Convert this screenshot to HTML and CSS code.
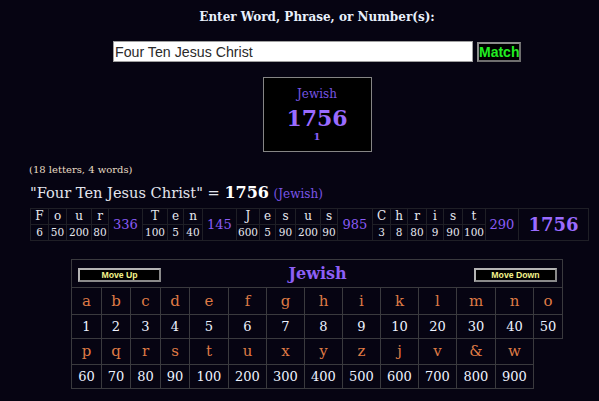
FILE: index.html
```html
<!DOCTYPE html>
<html>
<head>
<meta charset="utf-8">
<link rel="stylesheet" href="styles.css">
</head>
<body>
<div class="centered">
  <div class="heading">Enter Word, Phrase, or Number(s):</div>
  <div class="entry">
    <input class="phrase" type="text" value="Four Ten Jesus Christ">
    <button class="match">Match</button>
  </div>
  <div class="result">
    <div class="r-sys">Jewish</div>
    <div class="r-val">1756</div>
    <div class="r-num">1</div>
  </div>
</div>
<div class="counts">(18 letters, 4 words)</div>
<div class="quote">"Four Ten Jesus Christ" = <b class="q-tot">1756</b> <span class="q-sys">(Jewish)</span></div>
<div class="breakdown">
  <div class="bl">F</div><div class="bn">6</div>
  <div class="bl">o</div><div class="bn">50</div>
  <div class="bl">u</div><div class="bn">200</div>
  <div class="bl">r</div><div class="bn">80</div>
  <div class="bs">336</div>
  <div class="bl">T</div><div class="bn">100</div>
  <div class="bl">e</div><div class="bn">5</div>
  <div class="bl">n</div><div class="bn">40</div>
  <div class="bs">145</div>
  <div class="bl">J</div><div class="bn">600</div>
  <div class="bl">e</div><div class="bn">5</div>
  <div class="bl">s</div><div class="bn">90</div>
  <div class="bl">u</div><div class="bn">200</div>
  <div class="bl">s</div><div class="bn">90</div>
  <div class="bs">985</div>
  <div class="bl">C</div><div class="bn">3</div>
  <div class="bl">h</div><div class="bn">8</div>
  <div class="bl">r</div><div class="bn">80</div>
  <div class="bl">i</div><div class="bn">9</div>
  <div class="bl">s</div><div class="bn">90</div>
  <div class="bl">t</div><div class="bn">100</div>
  <div class="bs">290</div>
  <div class="bt">1756</div>
</div>
<div class="centered">
  <div class="cipher">
    <div class="c-head">
      <div class="c-left"><button class="move">Move Up</button></div>
      <div class="c-title">Jewish</div>
      <div class="c-right"><button class="move">Move Down</button></div>
    </div>
    <div class="filler"></div>
    <div class="cl">a</div><div class="cl">b</div><div class="cl">c</div><div class="cl">d</div><div class="cl">e</div><div class="cl">f</div><div class="cl">g</div><div class="cl">h</div><div class="cl">i</div><div class="cl">k</div><div class="cl">l</div><div class="cl">m</div><div class="cl">n</div><div class="cl">o</div>
    <div class="cn">1</div><div class="cn">2</div><div class="cn">3</div><div class="cn">4</div><div class="cn">5</div><div class="cn">6</div><div class="cn">7</div><div class="cn">8</div><div class="cn">9</div><div class="cn">10</div><div class="cn">20</div><div class="cn">30</div><div class="cn">40</div><div class="cn">50</div>
    <div class="cl">p</div><div class="cl">q</div><div class="cl">r</div><div class="cl">s</div><div class="cl">t</div><div class="cl">u</div><div class="cl">x</div><div class="cl">y</div><div class="cl">z</div><div class="cl">j</div><div class="cl">v</div><div class="cl">&amp;</div><div class="cl">w</div>
    <div class="cn">60</div><div class="cn">70</div><div class="cn">80</div><div class="cn">90</div><div class="cn">100</div><div class="cn">200</div><div class="cn">300</div><div class="cn">400</div><div class="cn">500</div><div class="cn">600</div><div class="cn">700</div><div class="cn">800</div><div class="cn">900</div>
  </div>
</div>
</body>
</html>
```
FILE: styles.css
```css
html, body {
  margin: 0;
  padding: 0;
  background: #060412;
}
body {
  font-family: "DejaVu Serif", "Liberation Serif", serif;
  color: #e6e8f2;
  width: 599px;
  height: 401px;
  overflow: hidden;
}
.centered {
  margin-left: 35px;
  display: flex;
  flex-direction: column;
  align-items: center;
}
.heading {
  margin-top: 10px;
  font-size: 12px;
  line-height: 14px;
  font-weight: bold;
  color: #e8f0fc;
  white-space: nowrap;
}
.entry {
  margin-top: 17px;
  display: flex;
  align-items: flex-start;
  gap: 4px;
}
.phrase {
  box-sizing: border-box;
  width: 360px;
  height: 21px;
  margin: 0;
  padding: 0 1px;
  border: 1px solid #a0a0a0;
  background: #ffffff;
  font-family: "Liberation Sans", Arial, sans-serif;
  font-size: 14.2px;
  color: #2a2a2a;
  outline: none;
}
.match {
  box-sizing: border-box;
  width: 44px;
  height: 20px;
  margin: 1px 0 0 0;
  padding: 0;
  border: 2px solid #8c8c8c;
  border-right-color: #6e6e6e;
  border-bottom-color: #6e6e6e;
  background: #000000;
  color: #22ee22;
  font-family: "Liberation Sans Narrow", "Liberation Sans", Arial, sans-serif;
  font-stretch: condensed;
  font-weight: bold;
  font-size: 14px;
  line-height: 16px;
}
.result {
  box-sizing: border-box;
  margin-top: 15px;
  width: 109px;
  height: 75px;
  border: 1px solid #858585;
  background: #000000;
  padding-top: 9px;
  display: flex;
  flex-direction: column;
  align-items: center;
}
.r-sys {
  font-size: 12px;
  line-height: 14px;
  color: #7654e2;
}
.r-val {
  margin-top: 5px;
  font-size: 22px;
  line-height: 24px;
  font-weight: bold;
  color: #9a6bff;
}
.r-num {
  margin-top: 1px;
  font-size: 10px;
  line-height: 12px;
  font-weight: bold;
  color: #8a5ef5;
}
.counts {
  margin: 12px 0 0 29px;
  font-size: 10px;
  line-height: 12px;
  color: #e6dcc4;
}
.quote {
  margin: 8px 0 0 30px;
  font-size: 14.6px;
  line-height: 18px;
  color: #e4e6ee;
  white-space: nowrap;
}
.q-tot {
  font-size: 16px;
  color: #ffffff;
}
.q-sys {
  font-size: 12px;
  color: #7a55e8;
}
.breakdown {
  margin: 5px 0 0 30px;
  display: inline-grid;
  grid-template-columns: 17px 17px 24px 16px 33px 24px 15px 18px 33px 22px 15px 19px 24px 16px 34px 17px 16px 18px 16px 18px 22px 32px 69px;
  grid-template-rows: 15px 15px;
  grid-auto-flow: column;
  gap: 1px;
  padding: 1px;
  background: #1f1f26;
}
.breakdown > div {
  background: #060412;
  text-align: center;
  white-space: nowrap;
}
.bl {
  font-size: 12px;
  line-height: 15px;
  color: #e6e8f0;
}
.bn {
  font-size: 10.5px;
  line-height: 15px;
  color: #e6e8f0;
}
.bs {
  grid-row: span 2;
  font-size: 13px;
  line-height: 31px;
  color: #8a5cf6;
}
.bt {
  grid-row: span 2;
  font-size: 18px;
  line-height: 31px;
  font-weight: bold;
  color: #9a6bff;
}
.cipher {
  margin-top: 18px;
  display: grid;
  grid-template-columns: 29px 28px 29px 28px 38px 37px 37px 37px 37px 37px 37px 38px 37px 28px;
  grid-template-rows: 27px 26px 23px 25px 23px;
  gap: 1px;
  padding: 1px;
  background: #3a3a3e;
}
.cipher > div {
  background: #060412;
  text-align: center;
}
.c-head {
  grid-column: 1 / -1;
  display: grid;
  grid-template-columns: 1fr auto 1fr;
  align-items: start;
  padding: 3px 5px 0 6px;
}
.c-left {
  text-align: left;
}
.c-right {
  text-align: right;
}
.c-title {
  margin-top: 2px;
  font-size: 16px;
  line-height: 18px;
  font-weight: bold;
  color: #8d5ff6;
}
.move {
  box-sizing: border-box;
  width: 83px;
  height: 14px;
  margin: 0;
  padding: 0;
  border: 2px solid #b4b4b4;
  border-right-color: #8a8a8a;
  border-bottom-color: #8a8a8a;
  background: #000000;
  color: #f4f48c;
  font-family: "Liberation Sans", Arial, sans-serif;
  font-weight: bold;
  font-size: 8.7px;
  line-height: 10px;
}
.filler {
  grid-column: 14;
  grid-row: 4 / 6;
  margin: 0 -1px -1px 0;
}
.cl {
  font-size: 15px;
  line-height: 26px;
  color: #df7a45;
}
.cn {
  font-size: 13px;
  line-height: 23px;
  color: #eef3ff;
}
.cipher > .cl:nth-child(n+31) {
  line-height: 25px;
}
```
